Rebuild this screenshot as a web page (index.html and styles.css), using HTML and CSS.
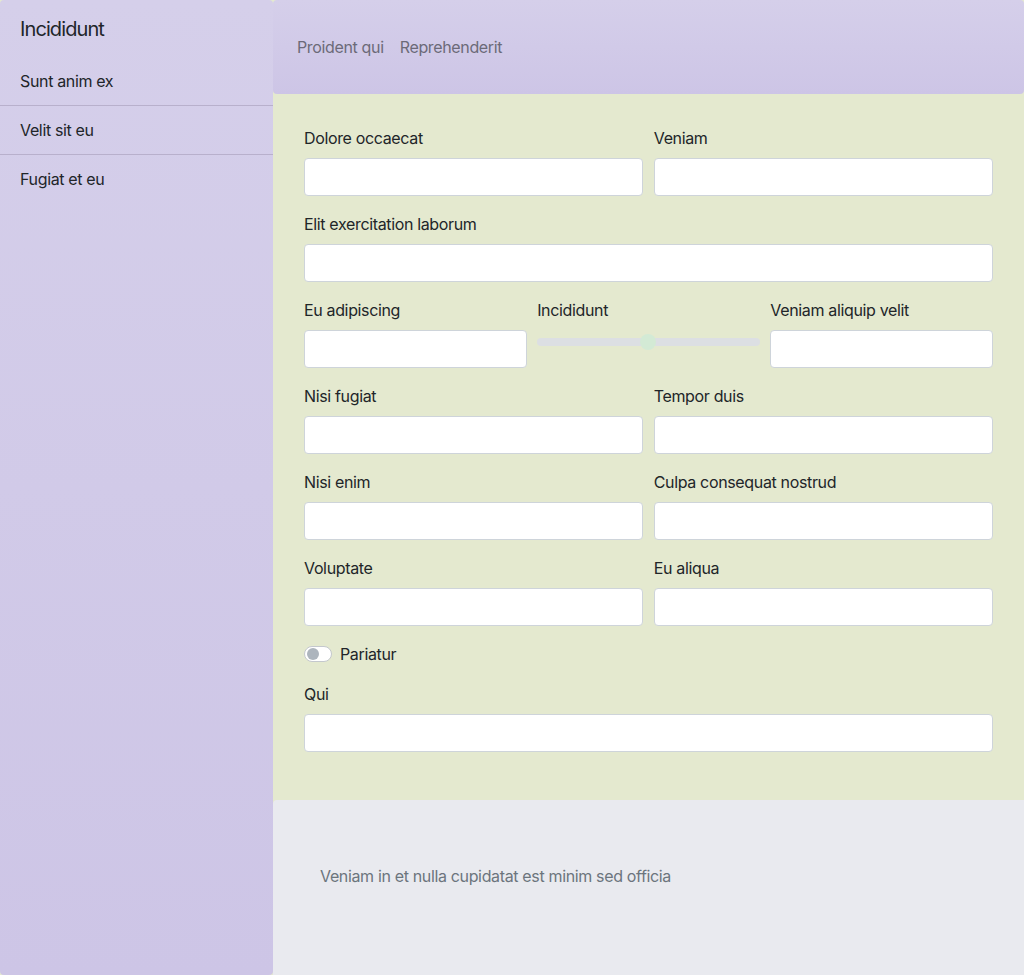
FILE: index.html
```html
<!DOCTYPE html>
<html lang="en">
<head>
<meta charset="utf-8">
<title>Form</title>
<link rel="stylesheet" href="styles.css">
</head>
<body>
<div class="layout">
  <aside class="sidebar">
    <div class="sidebar-title">Incididunt</div>
    <nav class="side-nav">
      <a class="side-item" href="#">Sunt anim ex</a>
      <a class="side-item" href="#">Velit sit eu</a>
      <a class="side-item" href="#">Fugiat et eu</a>
    </nav>
  </aside>
  <div class="content">
    <header class="topbar">
      <a class="top-link" href="#">Proident qui</a>
      <a class="top-link" href="#">Reprehenderit</a>
    </header>
    <main class="main">
      <form class="form">
        <div class="row two">
          <div class="field"><label>Dolore occaecat</label><input class="input" type="text"></div>
          <div class="field"><label>Veniam</label><input class="input" type="text"></div>
        </div>
        <div class="row one">
          <div class="field"><label>Elit exercitation laborum</label><input class="input" type="text"></div>
        </div>
        <div class="row three">
          <div class="field"><label>Eu adipiscing</label><input class="input" type="text"></div>
          <div class="field"><label>Incididunt</label><input class="range" type="range" min="0" max="100" value="50"></div>
          <div class="field"><label>Veniam aliquip velit</label><input class="input" type="text"></div>
        </div>
        <div class="row two">
          <div class="field"><label>Nisi fugiat</label><input class="input" type="text"></div>
          <div class="field"><label>Tempor duis</label><input class="input" type="text"></div>
        </div>
        <div class="row two">
          <div class="field"><label>Nisi enim</label><input class="input" type="text"></div>
          <div class="field"><label>Culpa consequat nostrud</label><input class="input" type="text"></div>
        </div>
        <div class="row two">
          <div class="field"><label>Voluptate</label><input class="input" type="text"></div>
          <div class="field"><label>Eu aliqua</label><input class="input" type="text"></div>
        </div>
        <div class="switch-row">
          <span class="switch"><span class="knob"></span></span>
          <span class="switch-label">Pariatur</span>
        </div>
        <div class="row one">
          <div class="field"><label>Qui</label><input class="input" type="text"></div>
        </div>
      </form>
    </main>
    <footer class="footer">
      <p class="footer-text">Veniam in et nulla cupidatat est minim sed officia</p>
    </footer>
  </div>
</div>
</body>
</html>
```

FILE: styles.css
```css
* { box-sizing: border-box; }
html, body { margin: 0; padding: 0; }
body {
  font-family: Inter, "Noto Sans", "Liberation Sans", sans-serif;
  font-size: 16px;
  line-height: 24px;
  letter-spacing: -0.35px;
  color: #212529;
  background: #e4e9cf;
}
.layout {
  display: flex;
  min-height: 975px;
}
.sidebar {
  width: 273px;
  flex: 0 0 273px;
  background: linear-gradient(to bottom, #d5cfea, #cdc5e6);
  border-radius: 4px;
  display: flex;
  flex-direction: column;
}
.sidebar-title {
  font-size: 20px;
  line-height: 24px;
  letter-spacing: -0.9px;
  padding: 17px 20px 16px;
}
.side-nav { display: flex; flex-direction: column; }
.side-item {
  display: block;
  padding: 12px 20px;
  color: #212529;
  text-decoration: none;
  border-bottom: 1px solid #b8b0cc;
}
.side-item:last-child { border-bottom: none; }
.content {
  flex: 1;
  display: flex;
  flex-direction: column;
}
.topbar {
  height: 94px;
  display: flex;
  align-items: center;
  gap: 16px;
  padding: 0 24px;
  background: linear-gradient(to bottom, #d5cfea, #cdc5e6);
  border-radius: 4px;
}
.top-link {
  color: #6c6a78;
  text-decoration: none;
}
.main {
  padding: 32px 31px 48px;
}
.form { display: flex; flex-direction: column; gap: 16px; }
.row { display: grid; gap: 10.5px; }
.row.one { grid-template-columns: 1fr; }
.row.two { grid-template-columns: 1fr 1fr; }
.row.three { grid-template-columns: 1fr 1fr 1fr; }
.field { display: flex; flex-direction: column; min-width: 0; }
.field label { margin-bottom: 8px; }
.input {
  height: 38px;
  width: 100%;
  border: 1px solid #ced4da;
  border-radius: 4px;
  background: #fff;
  font: inherit;
  padding: 6px 12px;
}
.range {
  -webkit-appearance: none;
  appearance: none;
  width: 100%;
  height: 24px;
  margin: 0;
  padding: 0;
  background: transparent;
}
.range::-webkit-slider-runnable-track {
  height: 8px;
  background: #dcdfe3;
  border-radius: 8px;
}
.range::-webkit-slider-thumb {
  -webkit-appearance: none;
  appearance: none;
  width: 16px;
  height: 16px;
  border-radius: 50%;
  background: #d3ead5;
  border: none;
  margin-top: -4px;
}
.switch-row {
  display: flex;
  align-items: center;
  gap: 8px;
  height: 24px;
}
.switch {
  width: 28px;
  height: 16px;
  border: 1px solid #c4c8cd;
  border-radius: 8px;
  background: #fff;
  display: flex;
  align-items: center;
  padding-left: 2px;
}
.knob {
  width: 12px;
  height: 12px;
  border-radius: 50%;
  background: #adb5bd;
}
.footer {
  flex: 1;
  background: #e9eaef;
  border-top-left-radius: 4px;
  padding: 64px 47px;
}
.footer-text {
  margin: 0;
  color: #6c757d;
}
```
